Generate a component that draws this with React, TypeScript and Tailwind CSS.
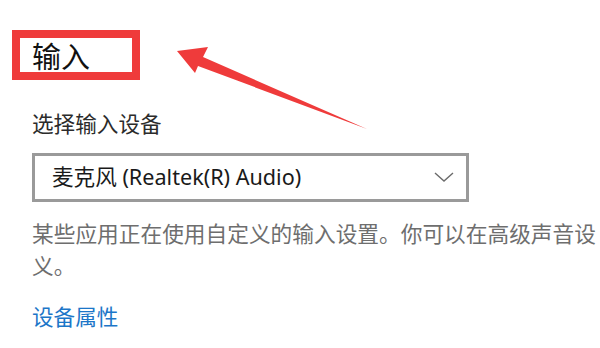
const cjk = "font-['Noto_Sans','Noto_Sans_CJK_SC',sans-serif]";

const Chevron = () => (
  <svg width="20" height="10" viewBox="0 0 20 10" fill="none">
    <polyline points="1,1 10,9 19,1" stroke="#6b6b6b" strokeWidth="1.4" />
  </svg>
);

// red annotation arrow drawn over the page
const Arrow = () => (
  <svg className="absolute left-0 top-0 pointer-events-none" width="600" height="348" viewBox="0 0 600 348">
    <polygon
      points="177,51 208,47 203,57 367,129 198,66 195,73"
      fill="#ef3b3b"
    />
  </svg>
);

export default function App() {
  return (
    <div className={`relative w-[600px] h-[348px] overflow-hidden bg-white ${cjk}`}>
      <div className="flex flex-col pl-[32px] pt-[42px]">
        <h2 className="text-[29px] leading-none text-[#111]">输入</h2>

        <div className="mt-[42px] text-[21.6px] leading-none text-[#2b2b2b]">选择输入设备</div>

        <div className="mt-[18px] flex h-[49px] w-[437px] items-center justify-between border-[3px] border-[#9a9a9a] pl-[17px] pr-[12px]">
          <span className="text-[21.6px] leading-none text-[#1a1a1a]">麦克风 (Realtek(R) Audio)</span>
          <Chevron />
        </div>

        <p className="mt-[16px] whitespace-nowrap text-[21.7px] leading-[32px] text-[#6e6e6e]">
          某些应用正在使用自定义的输入设置。你可以在高级声音设
          <br />
          义。
        </p>

        <a className="mt-[24px] text-[21.6px] leading-none text-[#1c76c8]">设备属性</a>
      </div>

      {/* highlight box round the heading */}
      <div className="absolute left-[12px] top-[30px] h-[50px] w-[128px] border-[8px] border-[#ef3b3b]" />
      <Arrow />
    </div>
  );
}
